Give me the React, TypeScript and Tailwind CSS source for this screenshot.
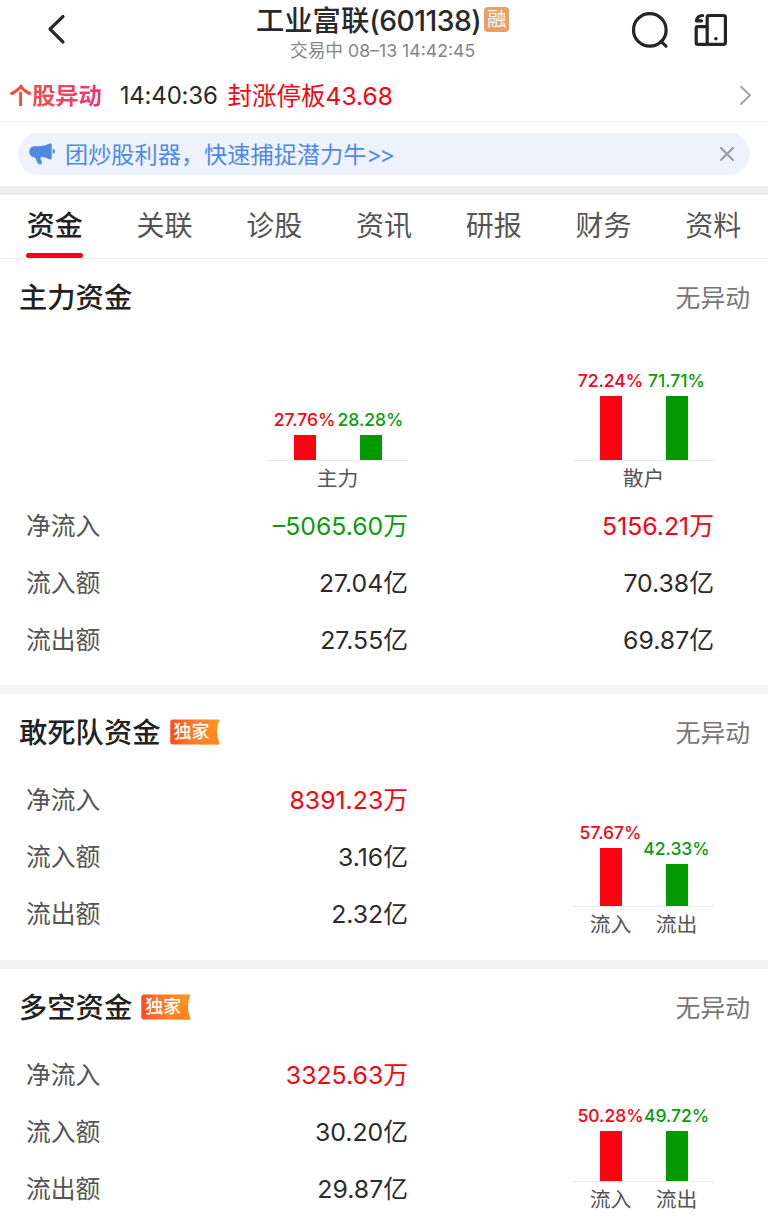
interface Bar {
  percent: string;
  height: number;
  color: 'red' | 'green';
  label?: string;
}

interface Row {
  label: string;
  value: string;
  tone?: 'red' | 'green';
  retail?: string;
}

const tabs = ['资金', '关联', '诊股', '资讯', '研报', '财务', '资料'];

const mainRows: Row[] = [
  { label: '净流入', value: '–5065.60万', tone: 'green', retail: '5156.21万' },
  { label: '流入额', value: '27.04亿', retail: '70.38亿' },
  { label: '流出额', value: '27.55亿', retail: '69.87亿' },
];

const squadRows: Row[] = [
  { label: '净流入', value: '8391.23万', tone: 'red' },
  { label: '流入额', value: '3.16亿' },
  { label: '流出额', value: '2.32亿' },
];

const longShortRows: Row[] = [
  { label: '净流入', value: '3325.63万', tone: 'red' },
  { label: '流入额', value: '30.20亿' },
  { label: '流出额', value: '29.87亿' },
];

const toneClass = {
  red: 'text-[#ff0012]',
  green: 'text-[#0a9c0a]',
};

function ExclusiveTag() {
  return (
    <div className="relative mb-[3px] ml-[9px] flex h-[26px] w-[50px] items-center pl-[4px]">
      <svg className="absolute inset-0" width="50" height="26" viewBox="0 0 50 26">
        <defs>
          <linearGradient id="tag" x1="0" y1="0" x2="1" y2="0">
            <stop offset="0" stopColor="#ff4a1c" />
            <stop offset="0.35" stopColor="#ff7426" />
            <stop offset="1" stopColor="#ff9722" />
          </linearGradient>
        </defs>
        <path d="M3 .5H48.5Q49.8.5 49.3 1.7Q44.5 12.5 49.3 24.2Q49.8 25.5 48.5 25.5H3Q.3 25.5.3 22.8V3.2Q.3.5 3 .5Z" fill="url(#tag)" />
        <path d="M30 25.5L46.6 10Q46.6 18 49.3 25.5Z" fill="#ff7d1a" opacity=".6" />
      </svg>
      <span className="relative text-[18px] leading-[26px] font-medium text-white">独家</span>
    </div>
  );
}

function SectionTitle({ title, exclusive }: { title: string; exclusive?: boolean }) {
  return (
    <div className="flex h-[78px] items-center justify-between pt-px pr-[18px] pl-[19px]">
      <div className="flex items-center">
        <h2 className="text-[28.3px] font-medium text-[#222224]">{title}</h2>
        {exclusive && <ExclusiveTag />}
      </div>
      <span className="pt-px text-[24.8px] text-[#77777b]">无异动</span>
    </div>
  );
}

function BarChart({ bars, caption }: { bars: Bar[]; caption?: string }) {
  return (
    <div className="w-[141px] shrink-0">
      <div className="grid grid-cols-2 items-end border-b border-[#e9e9ec] px-[4.5px]">
        {bars.map((bar) => (
          <div key={bar.percent} className="flex flex-col items-center">
            <span
              className={`mb-[4px] text-[17.5px] leading-[22px] font-medium whitespace-nowrap ${toneClass[bar.color]}`}
            >
              {bar.percent}
            </span>
            <div
              className={`w-[22px] ${bar.color === 'red' ? 'bg-[#fb0311]' : 'bg-[#009a00]'}`}
              style={{ height: bar.height }}
            />
          </div>
        ))}
      </div>
      {caption ? (
        <p className="text-center text-[20.8px] leading-[36px] text-[#555558]">{caption}</p>
      ) : (
        <div className="grid grid-cols-2 px-[4.5px] text-center text-[20.8px] leading-[36px] text-[#555558]">
          {bars.map((bar) => (
            <span key={bar.percent}>{bar.label}</span>
          ))}
        </div>
      )}
    </div>
  );
}

function DataRow({ row }: { row: Row }) {
  return (
    <div className="flex h-[57.2px] items-center text-[24.8px] text-[#2b2b2e]">
      <span className="w-[128px] text-[#555558]">{row.label}</span>
      <span className={`w-[254px] text-right whitespace-nowrap ${row.tone ? toneClass[row.tone] : ''}`}>
        {row.value}
      </span>
      {row.retail && (
        <span className={`w-[306px] text-right ${row.tone ? 'text-[#ff0012]' : ''}`}>{row.retail}</span>
      )}
    </div>
  );
}

function FlowSection({ title, rows, bars }: { title: string; rows: Row[]; bars: Bar[] }) {
  return (
    <section className="h-[266px]">
      <SectionTitle title={title} exclusive />
      <div className="flex items-start justify-between pr-[54px] pl-[26px]">
        <div>
          {rows.map((row) => (
            <DataRow key={row.label} row={row} />
          ))}
        </div>
        <div className="flex h-[171px] items-end">
          <BarChart bars={bars} />
        </div>
      </div>
    </section>
  );
}

function Header() {
  return (
    <header className="flex h-[71px]">
      <div className="flex w-[256px] pt-[13px] pl-[46px]">
        <svg width="20" height="32" viewBox="0 0 20 32" fill="none">
          <path d="M17 3.5L4 16.2L17 29" stroke="#29292b" strokeWidth="3.2" strokeLinecap="round" strokeLinejoin="round" />
        </svg>
      </div>
      <div className="flex flex-col items-center">
        <div className="flex h-[40px] items-center">
          <h1 className="pt-px text-[28.3px] leading-[40px] font-medium whitespace-nowrap text-[#29292b]">
            工业富联<span className="tracking-[-0.5px]">(601138)</span>
          </h1>
          <span className="mb-px ml-[3px] h-[25px] w-[25px] rounded-[4px] bg-[#eb9f63] text-center text-[19px] leading-[26px] text-white">
            融
          </span>
        </div>
        <p className="text-[17.7px] leading-[21px] text-[#858588]">交易中 08–13 14:42:45</p>
      </div>
      <div className="flex flex-1 items-start justify-end gap-[25px] pt-[11px] pr-[40px]">
        <svg width="38" height="38" viewBox="0 0 38 38" fill="none" stroke="#252527" strokeWidth="3.2" strokeLinecap="round">
          <circle cx="18.8" cy="18.9" r="16.3" />
          <path d="M30 30.4L35 35.2" />
        </svg>
        <svg width="34" height="38" viewBox="0 0 34 38" fill="none" stroke="#252527" strokeWidth="3.2" strokeLinejoin="round">
          <rect x="13.2" y="4.5" width="18.2" height="28.9" rx="1.8" />
          <path d="M13.2 15.6H3.9Q2.2 15.6 2.2 17.3V31.7Q2.2 33.4 3.9 33.4H13.2" />
          <path d="M8.7 4.5Q3.2 4.7 2.4 9.8H7.6" strokeLinecap="round" />
          <circle cx="21.9" cy="27.8" r="1.8" fill="#252527" stroke="none" />
        </svg>
      </div>
    </header>
  );
}

export default function App() {
  return (
    <div className="h-[1223px] w-[768px] overflow-hidden bg-white font-['Inter','Noto_Sans_CJK_SC',sans-serif]">
      <Header />

      {/* Stock alert */}
      <div className="flex h-[51px] items-center border-b border-[#f1f1f3] pr-[16px] pl-[9px] text-[24px]">
        <span className="bg-gradient-to-r from-[#ff4a2d] to-[#f62f78] bg-clip-text text-[23.2px] font-bold text-transparent">
          个股异动
        </span>
        <span className="ml-[18px] tracking-[-0.2px] text-[#29292b]">14:40:36</span>
        <span className="ml-[10px] text-[24.5px] text-[#ff0012]">封涨停板43.68</span>
        <svg className="ml-auto" width="14" height="22" viewBox="0 0 14 22" fill="none">
          <path d="M3 1.7L12 10.3L3 19" stroke="#a4a4a8" strokeWidth="2" strokeLinecap="round" />
        </svg>
      </div>

      {/* Promo banner */}
      <div className="h-[64px] px-[18px] pt-[11px]">
        <div className="flex h-[42px] items-center rounded-full bg-[#edf2fc] pr-[15px] pl-[11px] text-[#5089e5]">
          <svg width="26" height="22" viewBox="0 0 26 22" fill="currentColor">
            <path d="M5 3.2H11C15 3 18 1.9 20.3.6Q22.7-.3 22.7 2V15Q22.7 17 20.3 16.2Q17 14.4 12.8 13.8Q10.8 14.4 11.8 16.4L12.8 19Q13.5 21.5 11 21.4Q9 21.5 8 19L6.3 14.7Q.3 14 .3 8.8Q.3 3.8 5 3.2Z" />
            <path d="M23.7 5.8Q26 6.2 26 8.3Q26 10.5 23.7 10.8Z" />
          </svg>
          <span className="mt-[2px] ml-[10px] text-[23.2px]">
            团炒股利器，快速捕捉潜力牛<span className="tracking-[-2.4px]">&gt;&gt;</span>
          </span>
          <svg className="ml-auto" width="16" height="16" viewBox="0 0 16 16" fill="none">
            <path d="M2 2L14 14M14 2L2 14" stroke="#9b9ca1" strokeWidth="2.2" strokeLinecap="round" />
          </svg>
        </div>
      </div>

      <div className="h-[9px] bg-[#ededf0]" />

      {/* Tabs */}
      <nav className="grid h-[64px] grid-cols-7 border-b border-[#efeff1] text-[28px]">
        {tabs.map((tab, i) => (
          <div
            key={tab}
            className={`relative text-center leading-[63px] ${i === 0 ? 'font-medium text-[#222224]' : 'text-[#555558]'}`}
          >
            {tab}
            {i === 0 && (
              <div className="absolute bottom-0 left-[26px] h-[5.5px] w-[57px] rounded-full bg-[#ff0012]" />
            )}
          </div>
        ))}
      </nav>

      {/* Main funds */}
      <section className="h-[426px]">
        <SectionTitle title="主力资金" />
        <div className="flex h-[160px] items-end justify-end gap-[165px] pr-[54px]">
          <BarChart
            caption="主力"
            bars={[
              { percent: '27.76%', height: 25, color: 'red' },
              { percent: '28.28%', height: 25, color: 'green' },
            ]}
          />
          <BarChart
            caption="散户"
            bars={[
              { percent: '72.24%', height: 64, color: 'red' },
              { percent: '71.71%', height: 64, color: 'green' },
            ]}
          />
        </div>
        <div className="pt-px pl-[26px]">
          {mainRows.map((row) => (
            <DataRow key={row.label} row={row} />
          ))}
        </div>
      </section>

      <div className="h-[9px] bg-[#f4f4f5]" />

      <FlowSection
        title="敢死队资金"
        rows={squadRows}
        bars={[
          { percent: '57.67%', height: 58, color: 'red', label: '流入' },
          { percent: '42.33%', height: 42, color: 'green', label: '流出' },
        ]}
      />

      <div className="h-[9px] bg-[#f4f4f5]" />

      <FlowSection
        title="多空资金"
        rows={longShortRows}
        bars={[
          { percent: '50.28%', height: 50, color: 'red', label: '流入' },
          { percent: '49.72%', height: 50, color: 'green', label: '流出' },
        ]}
      />
    </div>
  );
}
